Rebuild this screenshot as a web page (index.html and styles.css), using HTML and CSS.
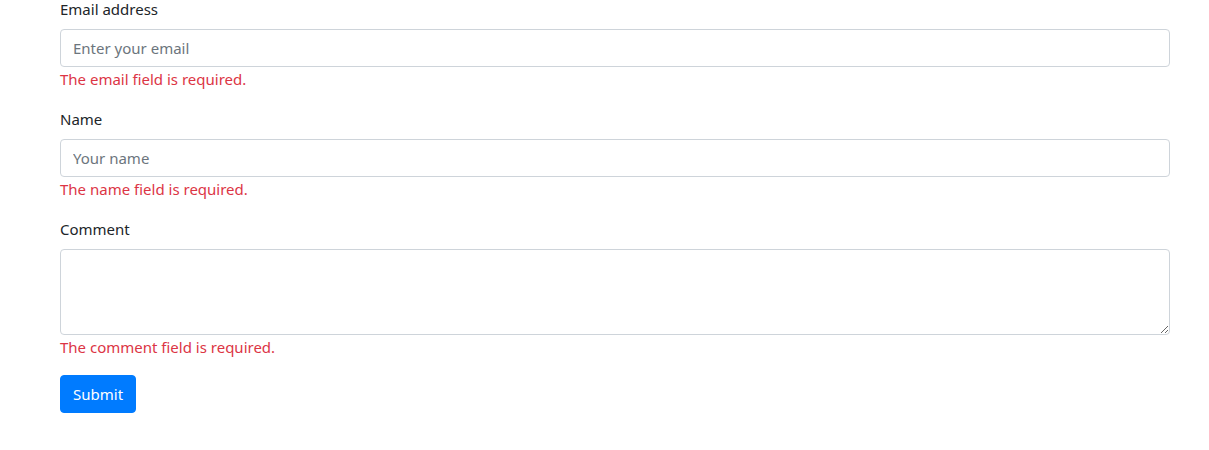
FILE: index.html
```html
<!DOCTYPE html>
<html lang="en">
<head>
<meta charset="utf-8">
<title>Form</title>
<link rel="stylesheet" href="styles.css">
</head>
<body>
<div class="container">
  <form class="form" novalidate>
    <div class="form-group">
      <label class="label" for="email">Email address</label>
      <input class="form-control" id="email" type="email" placeholder="Enter your email">
      <div class="error">The email field is required.</div>
    </div>
    <div class="form-group">
      <label class="label" for="name">Name</label>
      <input class="form-control" id="name" type="text" placeholder="Your name">
      <div class="error">The name field is required.</div>
    </div>
    <div class="form-group">
      <label class="label" for="comment">Comment</label>
      <textarea class="form-control textarea" id="comment" rows="3"></textarea>
      <div class="error">The comment field is required.</div>
    </div>
    <button class="btn" type="submit">Submit</button>
  </form>
</div>
</body>
</html>
```

FILE: styles.css
```css
* { box-sizing: border-box; }
html, body { margin: 0; padding: 0; background: #fff; }
body {
  font-family: "Noto Sans", "Open Sans", "Liberation Sans", sans-serif;
  font-size: 15px;
  line-height: 24px;
  color: #212529;
}
.container {
  width: 1110px;
  margin-left: 60px;
}
.form { margin-top: -3px; }
.form-group { margin-bottom: 16px; }
.label {
  display: block;
  margin-bottom: 8px;
}
.form-control {
  display: block;
  width: 100%;
  height: 38px;
  padding: 6px 12px;
  font: inherit;
  color: #495057;
  background: #fff;
  border: 1px solid #ced4da;
  border-radius: 4px;
  outline: none;
}
.form-control::placeholder { color: #6c757d; opacity: 1; }
.textarea {
  height: 86px;
  resize: vertical;
}
.error { color: #dc3545; }
.btn {
  display: inline-block;
  height: 38px;
  padding: 6px 12px;
  font: inherit;
  color: #fff;
  background: #007bff;
  border: 1px solid #007bff;
  border-radius: 4px;
  cursor: pointer;
}
```
